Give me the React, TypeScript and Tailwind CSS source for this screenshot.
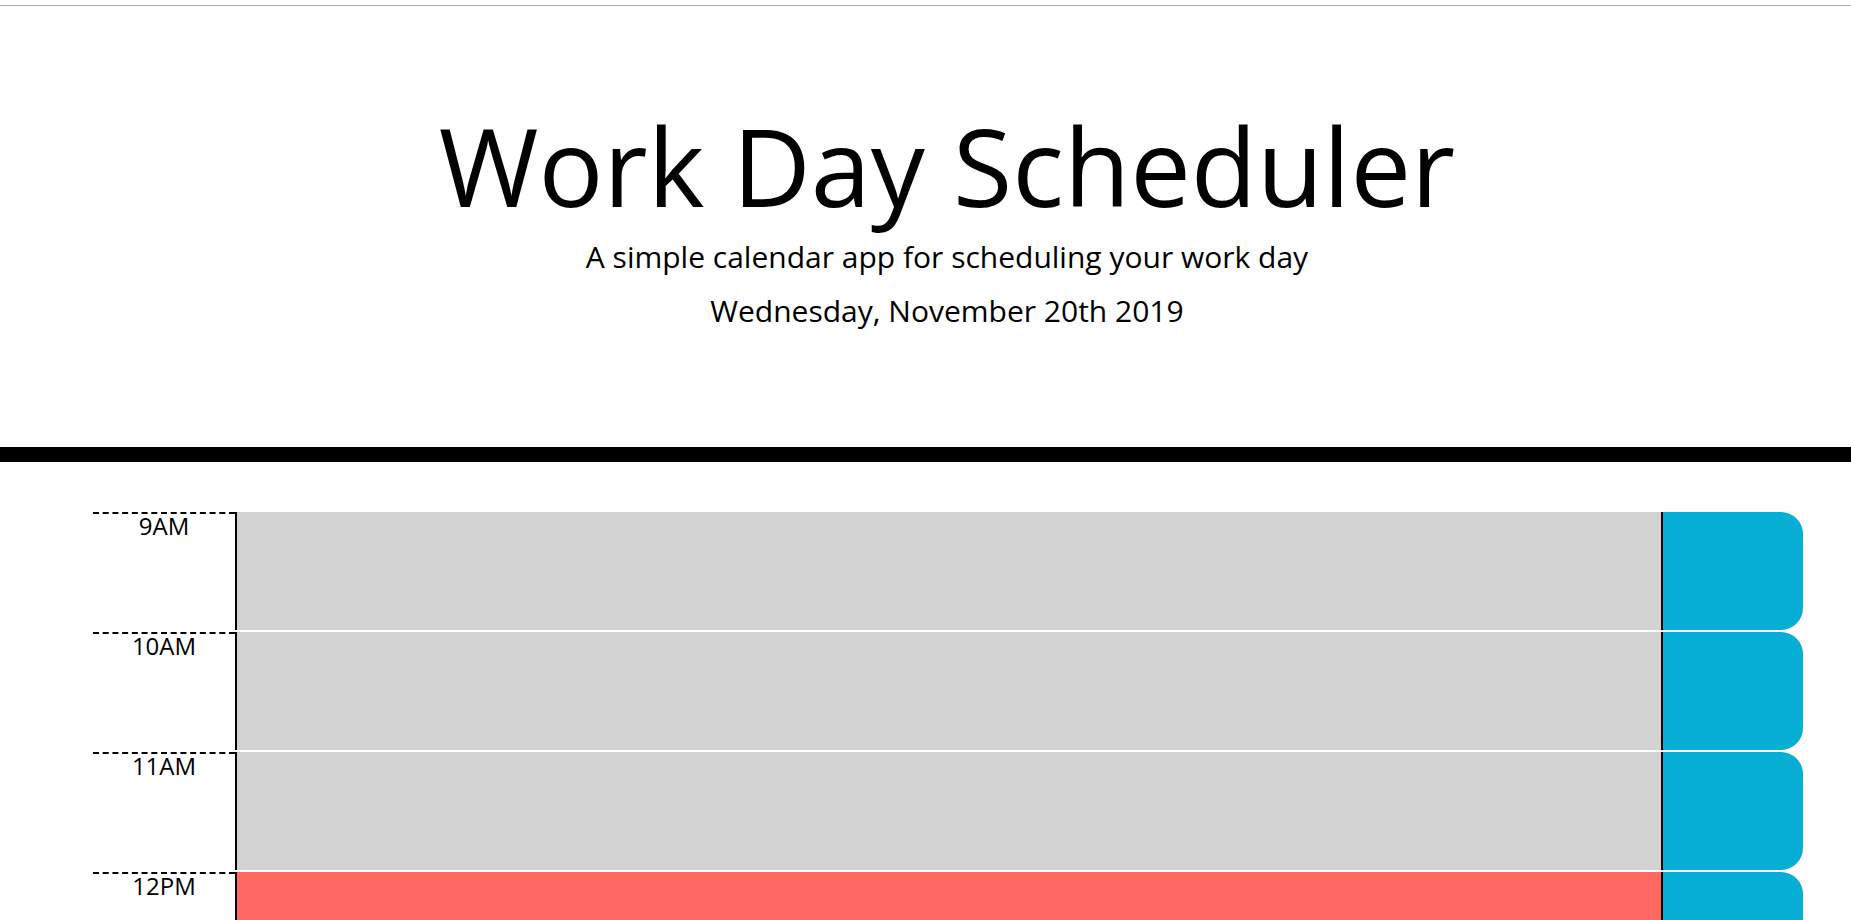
import React from "react";

type Hour = { label: string; state: "past" | "present" | "future" };

const hours: Hour[] = [
  { label: "9AM", state: "past" },
  { label: "10AM", state: "past" },
  { label: "11AM", state: "past" },
  { label: "12PM", state: "present" },
];

function Row({ h }: { h: Hour }) {
  const bg =
    h.state === "past"
      ? "bg-[#d3d3d3]"
      : h.state === "present"
      ? "bg-[#ff6961]"
      : "bg-[#77dd77]";
  return (
    <div className="flex h-[120px] border-t-2 border-white">
      <div className="w-[142px] shrink-0 border-t-2 border-dashed border-black text-center text-[24px] leading-[24px] text-black">
        {h.label}
      </div>
      <div className={`flex-1 border-l-2 border-black ${bg}`}></div>
      <button className="w-[142px] shrink-0 border-l-2 border-black bg-[#06aed5] rounded-r-[22px]"></button>
    </div>
  );
}

export default function App() {
  return (
    <div
      className="h-[920px] overflow-hidden bg-white text-black"
      style={{ fontFamily: '"Open Sans", "Liberation Sans", sans-serif' }}
    >
      <div className="h-[5px]"></div>
      <div className="h-px bg-[#ababab]"></div>
      <header className="pl-[43px] pt-[95px] pb-[114px] border-b-[15px] border-black text-center">
        <h1 className="text-[108px] leading-[130px] font-normal">Work Day Scheduler</h1>
        <p className="mt-[3px] text-[30px] leading-[45px]">
          A simple calendar app for scheduling your work day
        </p>
        <p className="mt-[9px] text-[30px] leading-[45px]">Wednesday, November 20th 2019</p>
      </header>
      <div className="ml-[93px] w-[1710px] pt-[48px]">
        {hours.map((h) => (
          <Row key={h.label} h={h} />
        ))}
      </div>
    </div>
  );
}
